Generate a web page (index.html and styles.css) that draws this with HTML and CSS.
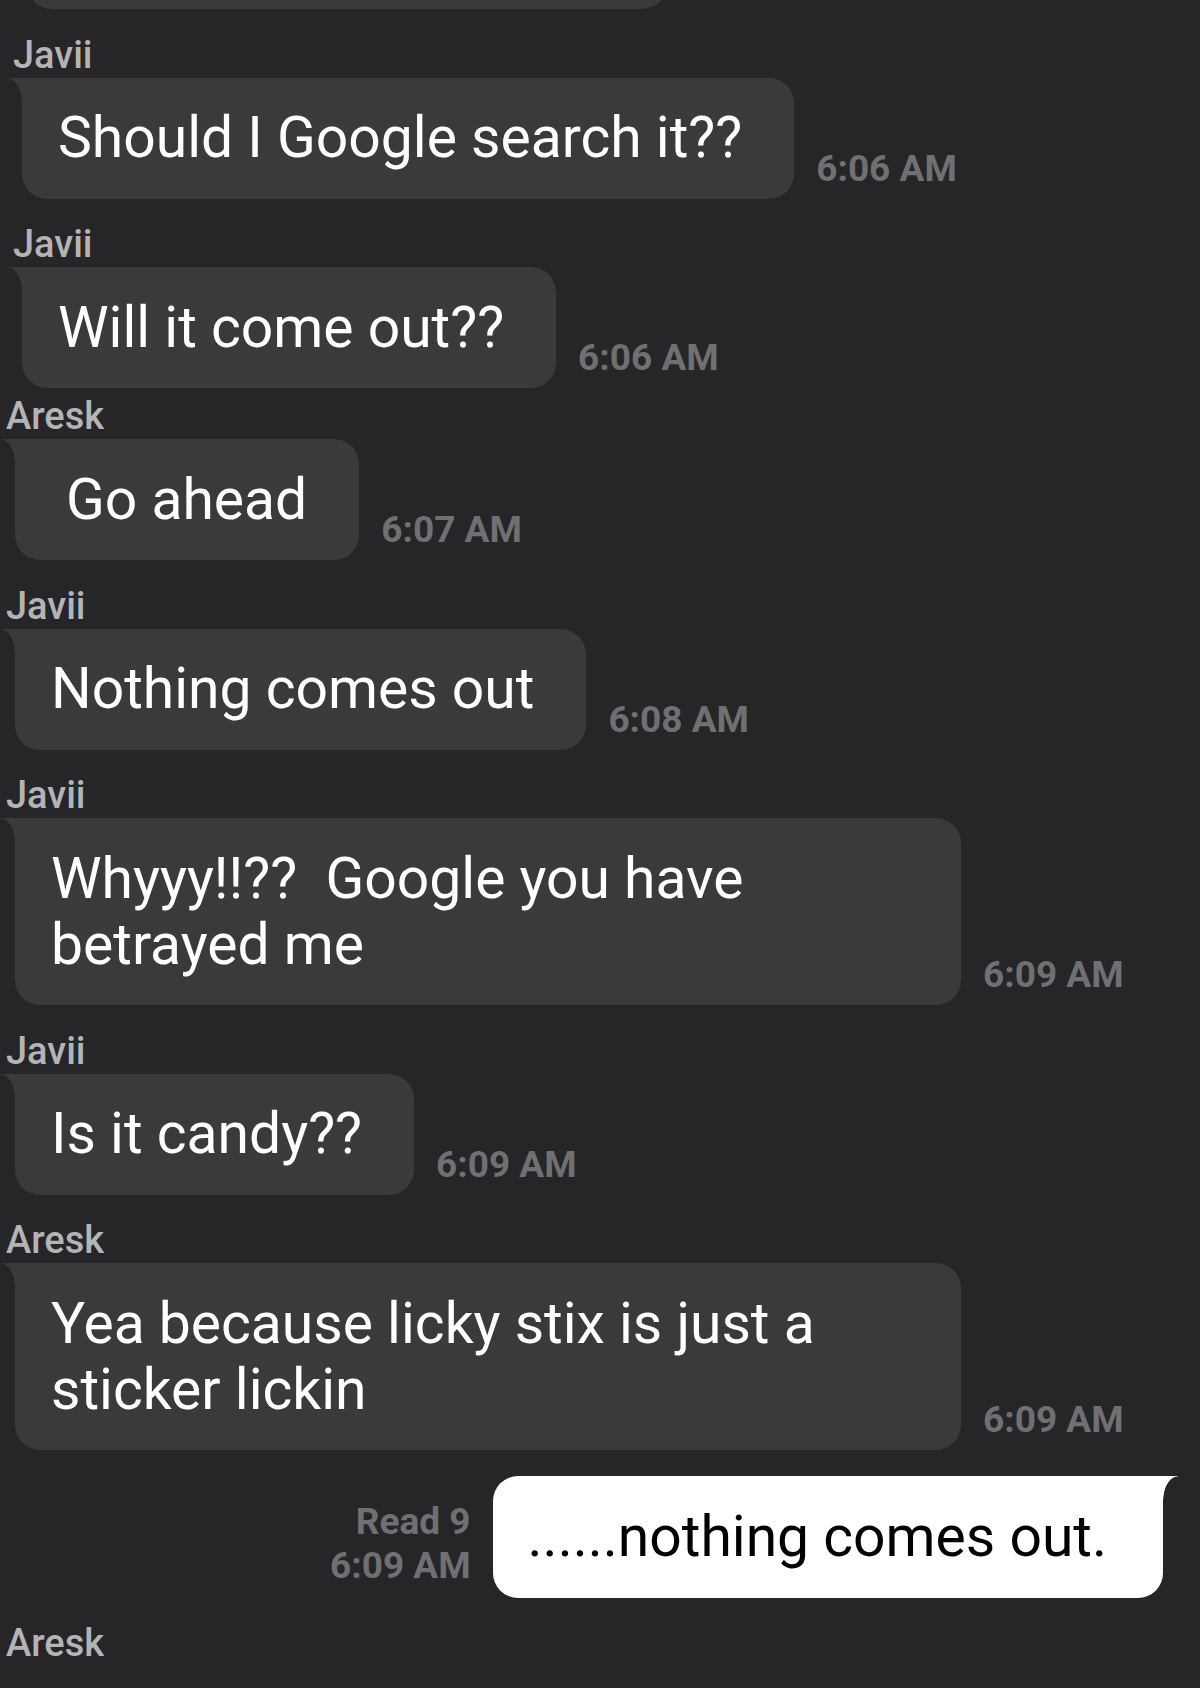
FILE: index.html
```html
<!DOCTYPE html>
<html lang="en">
<head>
<meta charset="utf-8">
<title>Chat</title>
<link rel="stylesheet" href="styles.css">
</head>
<body>
<div class="chat">
  <div class="bubble partial"></div>

  <div class="msg shift">
    <div class="name">Javii</div>
    <div class="row">
      <div class="bubble">Should I Google search it??</div>
      <div class="time">6:06 AM</div>
    </div>
  </div>

  <div class="msg shift">
    <div class="name">Javii</div>
    <div class="row">
      <div class="bubble">Will it come out??</div>
      <div class="time">6:06 AM</div>
    </div>
  </div>

  <div class="msg tight">
    <div class="name">Aresk</div>
    <div class="row">
      <div class="bubble wide-pad">Go ahead</div>
      <div class="time">6:07 AM</div>
    </div>
  </div>

  <div class="msg">
    <div class="name">Javii</div>
    <div class="row">
      <div class="bubble">Nothing comes out</div>
      <div class="time">6:08 AM</div>
    </div>
  </div>

  <div class="msg">
    <div class="name">Javii</div>
    <div class="row">
      <div class="bubble">Whyyy!!??&nbsp; Google you have betrayed me</div>
      <div class="time">6:09 AM</div>
    </div>
  </div>

  <div class="msg">
    <div class="name">Javii</div>
    <div class="row">
      <div class="bubble">Is it candy??</div>
      <div class="time">6:09 AM</div>
    </div>
  </div>

  <div class="msg">
    <div class="name">Aresk</div>
    <div class="row">
      <div class="bubble">Yea because licky stix is just a sticker lickin</div>
      <div class="time">6:09 AM</div>
    </div>
  </div>

  <div class="sent-row">
    <div class="receipt">
      <div>Read 9</div>
      <div>6:09 AM</div>
    </div>
    <div class="bubble sent">......nothing comes out.</div>
  </div>

  <div class="msg">
    <div class="name">Aresk</div>
  </div>
</div>
</body>
</html>
```

FILE: styles.css
```css
html, body {
  margin: 0;
  padding: 0;
  background: #262528;
}

body {
  width: 1200px;
  height: 1688px;
  overflow: hidden;
  font-family: Roboto, "Liberation Sans", Arial, sans-serif;
}

.chat {
  display: flex;
  flex-direction: column;
}

.bubble {
  position: relative;
  box-sizing: border-box;
  max-width: 946px;
  background: #3a393c;
  color: #ffffff;
  font-size: 57px;
  line-height: 66px;
  padding: 27.5px 52px 27.5px 36px;
  border-radius: 0 25px 25px 25px;
}

.bubble::before {
  content: "";
  position: absolute;
  left: -14px;
  top: 0;
  width: 14px;
  height: 24px;
  background: radial-gradient(ellipse 14px 24px at 0 100%, transparent 96%, #3a393c 100%);
}

.bubble.partial {
  width: 640px;
  height: 120px;
  margin: -111px 0 0 27px;
  border-radius: 25px;
}

.bubble.partial::before {
  display: none;
}

.bubble.wide-pad {
  padding-left: 51px;
}

.msg {
  margin: 25.5px 0 0 15px;
}

.msg.shift {
  margin-left: 22px;
}

.msg.tight {
  margin-top: 8px;
}

.name {
  margin-left: -9px;
  color: #b4b4b6;
  font-size: 38px;
  font-weight: 500;
  line-height: 40px;
  margin-bottom: 3px;
}

.row {
  display: flex;
  align-items: flex-end;
  gap: 22px;
}

.time {
  color: #707072;
  font-size: 37px;
  font-weight: 700;
  line-height: 40px;
  margin-bottom: 10px;
  white-space: nowrap;
  flex: none;
}

.sent-row {
  display: flex;
  justify-content: flex-end;
  align-items: flex-end;
  gap: 22px;
  margin: 25.5px 37px 0 0;
}

.receipt {
  color: #707072;
  font-size: 37px;
  font-weight: 700;
  line-height: 44px;
  text-align: right;
  margin-bottom: 10px;
}

.bubble.sent {
  background: #ffffff;
  color: #000000;
  padding: 28px 56px 28px 35px;
  border-radius: 25px 0 25px 25px;
}

.bubble.sent::before {
  left: auto;
  right: -15px;
  width: 15px;
  background: radial-gradient(ellipse 15px 24px at 100% 100%, transparent 96%, #ffffff 100%);
}
```
